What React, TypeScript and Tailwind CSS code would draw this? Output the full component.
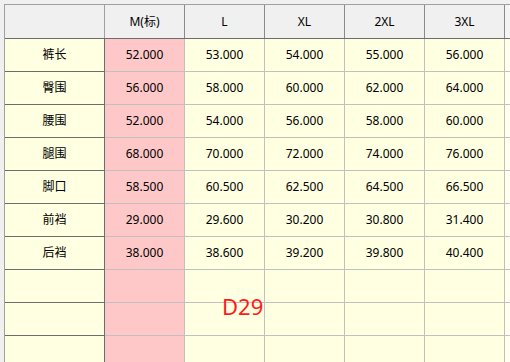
const SIZES = ['M(标)', 'L', 'XL', '2XL', '3XL'];

const ROWS: { name: string; values: string[] }[] = [
  { name: '裤长', values: ['52.000', '53.000', '54.000', '55.000', '56.000'] },
  { name: '臀围', values: ['56.000', '58.000', '60.000', '62.000', '64.000'] },
  { name: '腰围', values: ['52.000', '54.000', '56.000', '58.000', '60.000'] },
  { name: '腿围', values: ['68.000', '70.000', '72.000', '74.000', '76.000'] },
  { name: '脚口', values: ['58.500', '60.500', '62.500', '64.500', '66.500'] },
  { name: '前裆', values: ['29.000', '29.600', '30.200', '30.800', '31.400'] },
  { name: '后裆', values: ['38.000', '38.600', '39.200', '39.800', '40.400'] },
  { name: '', values: ['', '', '', '', ''] },
  { name: '', values: ['', '', '', '', ''] },
  { name: '', values: ['', '', '', '', ''] },
];

export default function App() {
  return (
    <div
      className="relative w-[510px] h-[362px] overflow-hidden bg-[#f0f0f0] pl-1 pt-1 text-[12px] text-black"
      style={{ fontFamily: '"Noto Sans", "Noto Sans CJK SC", sans-serif' }}
    >
      <div className="border-l border-t border-[#a0a0a0]">
        {/* Header */}
        <div className="flex h-[34px] border-b border-[#6d6d6d]">
          <div className="w-[100px] shrink-0 border-r border-[#a0a0a0] bg-[#f0f0f0]" />
          {SIZES.map((s) => (
            <div
              key={s}
              className="w-[80px] shrink-0 flex items-center justify-center border-r border-[#8a8a8a] bg-[#f0f0f0]"
            >
              {s}
            </div>
          ))}
          <div className="w-[80px] shrink-0 bg-[#f4f4f4]" />
        </div>

        {/* Body */}
        {ROWS.map((r, i) => (
          <div key={i} className="flex h-[33px]">
            <div className="w-[100px] shrink-0 flex items-center justify-center border-r border-b border-[#6d6d6d] bg-[#ffffe1]">
              {r.name}
            </div>
            {r.values.map((v, j) => (
              <div
                key={j}
                className={
                  j === 0
                    ? 'w-[80px] shrink-0 flex items-center justify-center border-r border-b border-[#c0c0c0] bg-[#ffc8c8]'
                    : 'w-[80px] shrink-0 flex items-center justify-center border-r border-b border-[#c0c0c0] bg-[#ffffe1]'
                }
              >
                {v}
              </div>
            ))}
            <div className="w-[80px] shrink-0 border-b border-[#c0c0c0] bg-[#ffffec]" />
          </div>
        ))}
      </div>

      <div className="absolute left-[222px] top-[295px] text-[22px] leading-none text-[#ff1a1a]">
        D29
      </div>
    </div>
  );
}
